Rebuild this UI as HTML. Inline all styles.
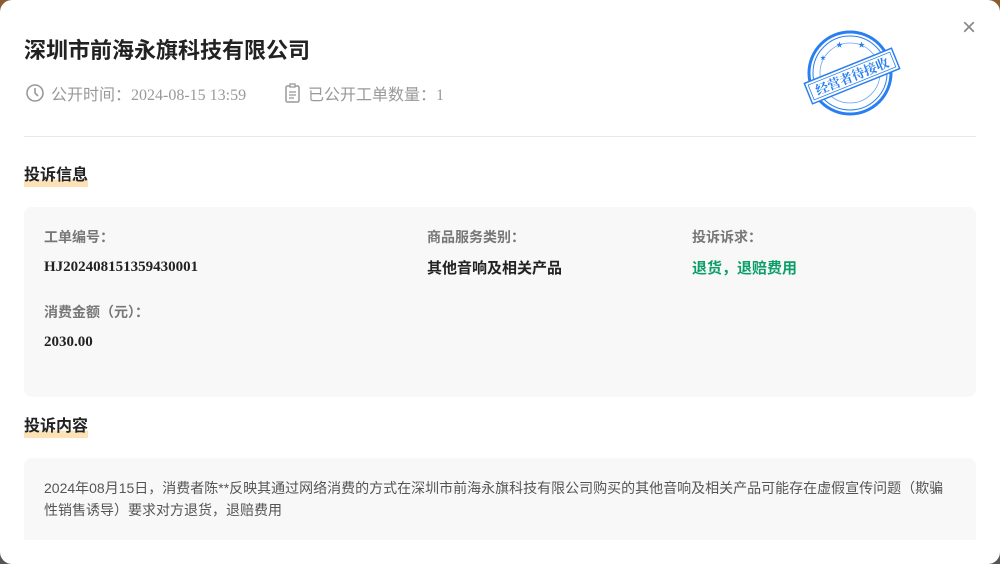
<!DOCTYPE html>
<html><head><meta charset="utf-8"><style>
html,body{margin:0;padding:0;width:1000px;height:564px;overflow:hidden;background:linear-gradient(#8a5a30,#8a5a30 40%,#666 60%,#555);}
.m{position:absolute;left:0;top:0;width:1000px;height:564px;background:#fff;border-radius:12px;overflow:hidden;font-family:"Liberation Sans","Noto Sans CJK SC",sans-serif;}
.t{position:absolute;left:24px;top:33px;font-size:22px;font-weight:bold;color:#222;}
.meta{position:absolute;top:81px;font-size:16px;color:#999;display:flex;align-items:center;font-family:"Liberation Serif","Noto Sans CJK SC",serif;}
.hr{position:absolute;left:24px;top:136px;width:952px;height:1px;background:#e8e8e8;}
.h{position:absolute;left:24px;font-size:16px;font-weight:bold;color:#222;background:linear-gradient(transparent 65%,#fde2b8 65%);line-height:22px;}
.box{position:absolute;left:24px;width:952px;background:#f8f8f8;border-radius:8px;}
.lb{position:absolute;font-size:14px;font-weight:bold;color:#777;}
.v{position:absolute;font-size:15px;font-weight:bold;color:#222;font-family:"Liberation Serif","Noto Sans CJK SC",serif;}
.x{position:absolute;left:962px;top:14px;font-size:24px;color:#888;font-weight:300;}
</style></head><body><div class="m">
<div class="t">深圳市前海永旗科技有限公司</div>
<div class="meta" style="left:25px"><svg width="20" height="20" viewBox="0 0 20 20" style="margin-right:6px"><circle cx="10" cy="10" r="8" fill="none" stroke="#999" stroke-width="1.6"/><path d="M10 5v5l3 3" fill="none" stroke="#999" stroke-width="1.6"/></svg>公开时间：2024-08-15 13:59</div>
<div class="meta" style="left:284px"><svg width="18" height="20" viewBox="0 0 18 20" style="margin-right:6px"><rect x="2" y="3" width="13" height="16" rx="1.5" fill="none" stroke="#999" stroke-width="1.5"/><rect x="6" y="1" width="5" height="3" fill="#fff" stroke="#999" stroke-width="1.3"/><path d="M5 9h7M5 12h7M5 15h5" stroke="#999" stroke-width="1.3"/></svg>已公开工单数量：1</div>
<svg style="position:absolute;left:800px;top:28px" width="104" height="90" viewBox="0 0 104 90">
<circle cx="50" cy="45" r="41" fill="none" stroke="#2a7ff0" stroke-width="3"/>
<circle cx="50" cy="45" r="37" fill="none" stroke="#2a7ff0" stroke-width="1"/>
<circle cx="50" cy="45" r="30" fill="none" stroke="#6aa8f5" stroke-width="0.8"/>
<text x="36" y="19" fill="#2a7ff0" font-size="7">★</text><text x="58" y="19" fill="#2a7ff0" font-size="7">★</text><text x="20" y="32" fill="#2a7ff0" font-size="6">★</text>
<g transform="rotate(-22 52 48)"><rect x="5" y="37" width="94" height="22" fill="#fff" stroke="#2a7ff0" stroke-width="1.5"/><rect x="8" y="40" width="88" height="16" fill="none" stroke="#2a7ff0" stroke-width="0.8"/><text x="52" y="53" text-anchor="middle" fill="#2a7ff0" font-size="13" font-weight="bold" font-family="Noto Serif CJK SC,serif">经营者待接收</text></g>
</svg>
<div class="x">×</div>
<div class="hr"></div>
<div class="h" style="top:165px">投诉信息</div>
<div class="box" style="top:207px;height:190px">
<div class="lb" style="left:20px;top:20px">工单编号：</div>
<div class="v" style="left:20px;top:52px">HJ202408151359430001</div>
<div class="lb" style="left:403px;top:20px">商品服务类别：</div>
<div class="v" style="left:403px;top:50px">其他音响及相关产品</div>
<div class="lb" style="left:668px;top:20px">投诉诉求：</div>
<div class="v" style="left:668px;top:50px;color:#0e9e6a">退货，退赔费用</div>
<div class="lb" style="left:20px;top:95px">消费金额（元）：</div>
<div class="v" style="left:20px;top:127px">2030.00</div>
</div>
<div class="h" style="top:416px">投诉内容</div>
<div class="box" style="top:458px;height:82px;border-radius:8px 8px 0 0">
<div style="position:absolute;left:20px;top:19px;width:910px;font-size:14px;line-height:22px;color:#555">2024年08月15日，消费者陈**反映其通过网络消费的方式在深圳市前海永旗科技有限公司购买的其他音响及相关产品可能存在虚假宣传问题（欺骗性销售诱导）要求对方退货，退赔费用</div>
</div>
</div></body></html>
